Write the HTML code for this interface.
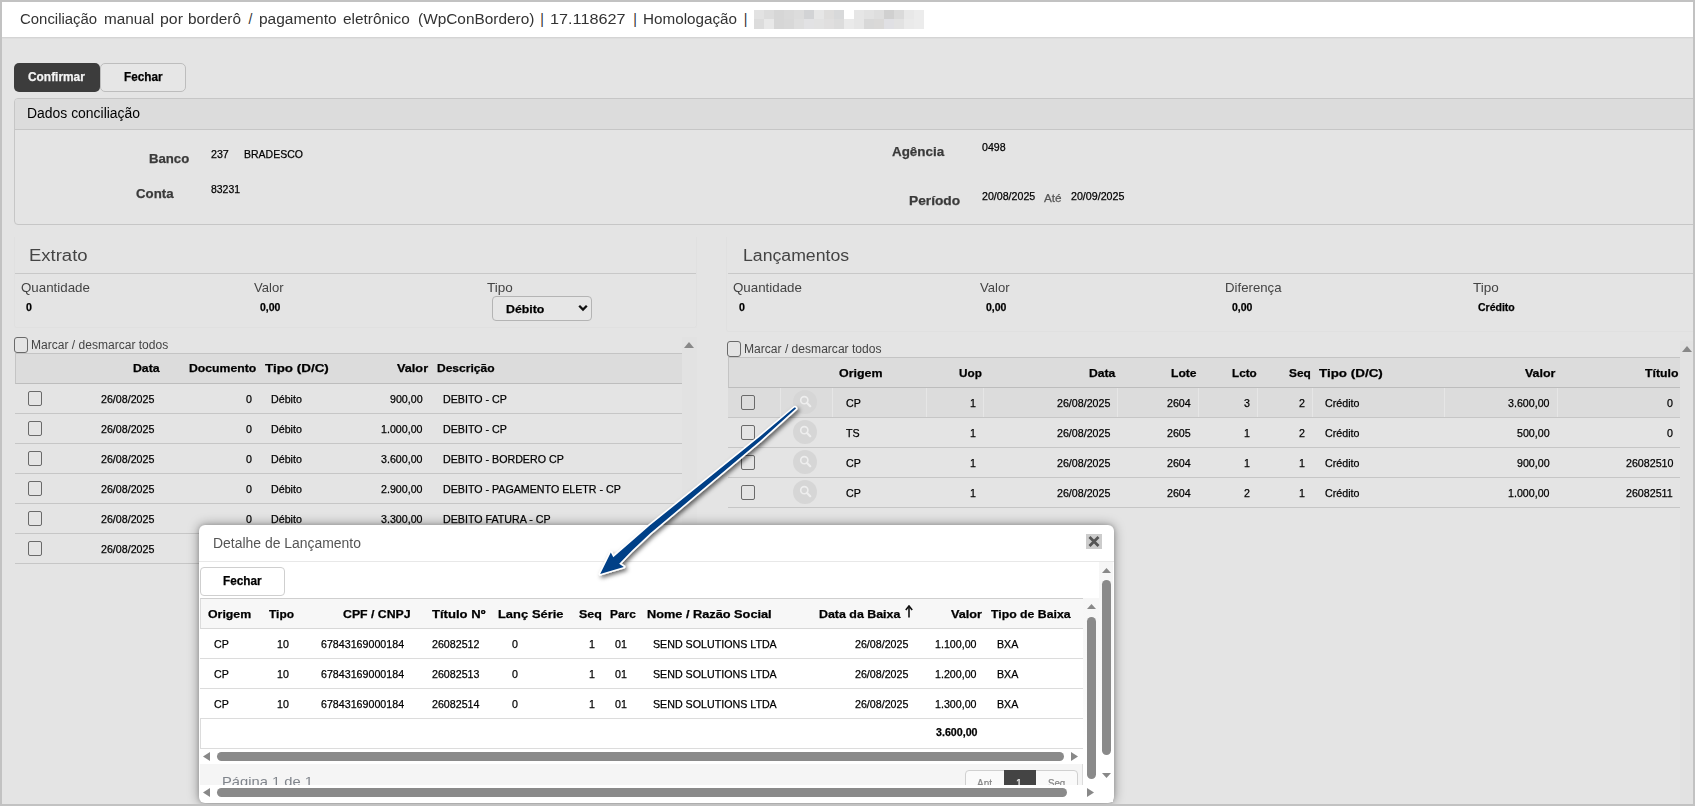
<!DOCTYPE html>
<html><head><meta charset="utf-8"><style>
html,body{margin:0;padding:0;}
body{width:1695px;height:806px;overflow:hidden;position:relative;background:#e4e4e4;font-family:'Liberation Sans', sans-serif;}
body>div,body>span,body>svg{position:absolute;box-sizing:border-box;}
.t{white-space:pre;transform-origin:0 0;}
.s{-webkit-text-stroke:0.25px currentColor;}
</style></head><body>
<div style="left:0px;top:0px;width:1695px;height:806px;background:#e4e4e4;"></div>
<div style="left:2px;top:2px;width:1691px;height:35px;background:#fff;"></div>
<div style="left:2px;top:37px;width:1691px;height:1px;background:#d4d4d4;"></div>
<div style="left:2px;top:38px;width:1691px;height:1px;background:#dedede;"></div>
<span class="t" style="left:19.60px;top:10.00px;font-size:14px;line-height:19px;font-weight:400;color:#333;transform:scaleX(1.0663);">Conciliação</span>
<span class="t" style="left:103.70px;top:10.00px;font-size:14px;line-height:19px;font-weight:400;color:#333;transform:scaleX(1.0937);">manual</span>
<span class="t" style="left:160.40px;top:10.00px;font-size:14px;line-height:19px;font-weight:400;color:#333;transform:scaleX(1.1326);">por</span>
<span class="t" style="left:188.00px;top:10.00px;font-size:14px;line-height:19px;font-weight:400;color:#333;transform:scaleX(1.0976);">borderô</span>
<span class="t" style="left:258.90px;top:10.00px;font-size:14px;line-height:19px;font-weight:400;color:#333;transform:scaleX(1.1072);">pagamento</span>
<span class="t" style="left:343.30px;top:10.00px;font-size:14px;line-height:19px;font-weight:400;color:#333;transform:scaleX(1.0999);">eletrônico</span>
<span class="t" style="left:417.50px;top:10.00px;font-size:14px;line-height:19px;font-weight:400;color:#333;transform:scaleX(1.0994);">(WpConBordero)</span>
<span class="t" style="left:550.34px;top:10.00px;font-size:14px;line-height:19px;font-weight:400;color:#333;transform:scaleX(1.1592);">17.118627</span>
<span class="t" style="left:643.01px;top:10.00px;font-size:14px;line-height:19px;font-weight:400;color:#333;transform:scaleX(1.0888);">Homologação</span>
<span class="t" style="left:540.30px;top:10.00px;font-size:14px;line-height:19px;font-weight:400;color:#333;">|</span>
<span class="t" style="left:633.20px;top:10.00px;font-size:14px;line-height:19px;font-weight:400;color:#333;">|</span>
<span class="t" style="left:743.80px;top:10.00px;font-size:14px;line-height:19px;font-weight:400;color:#333;">|</span>
<span class="t" style="left:248.60px;top:10.00px;font-size:14px;line-height:19px;font-weight:400;color:#333;">/</span>
<div style="left:754px;top:10px;width:10px;height:9px;background:#e2e2e2;"></div>
<div style="left:754px;top:19px;width:10px;height:10px;background:#dcdcdc;"></div>
<div style="left:764px;top:10px;width:10px;height:9px;background:#dcdcdc;"></div>
<div style="left:764px;top:19px;width:10px;height:10px;background:#e8e8e8;"></div>
<div style="left:774px;top:10px;width:10px;height:9px;background:#d6d6d6;"></div>
<div style="left:774px;top:19px;width:10px;height:10px;background:#d6d6d6;"></div>
<div style="left:784px;top:10px;width:10px;height:9px;background:#d9d9d9;"></div>
<div style="left:784px;top:19px;width:10px;height:10px;background:#d8d8d8;"></div>
<div style="left:794px;top:10px;width:10px;height:9px;background:#dcdcdc;"></div>
<div style="left:794px;top:19px;width:10px;height:10px;background:#dedede;"></div>
<div style="left:804px;top:10px;width:10px;height:9px;background:#d2d3d5;"></div>
<div style="left:804px;top:19px;width:10px;height:10px;background:#e2e2e4;"></div>
<div style="left:814px;top:10px;width:10px;height:9px;background:#e6e6e6;"></div>
<div style="left:814px;top:19px;width:10px;height:10px;background:#e2e2e2;"></div>
<div style="left:824px;top:10px;width:10px;height:9px;background:#dedddc;"></div>
<div style="left:824px;top:19px;width:10px;height:10px;background:#e0dfdf;"></div>
<div style="left:834px;top:10px;width:10px;height:9px;background:#d8d9da;"></div>
<div style="left:834px;top:19px;width:10px;height:10px;background:#dcdcdc;"></div>
<div style="left:844px;top:10px;width:10px;height:9px;background:#ffffff;"></div>
<div style="left:844px;top:19px;width:10px;height:10px;background:#eaeaea;"></div>
<div style="left:854px;top:10px;width:10px;height:9px;background:#e6e6e6;"></div>
<div style="left:854px;top:19px;width:10px;height:10px;background:#e6e6e6;"></div>
<div style="left:864px;top:10px;width:10px;height:9px;background:#e2e2e2;"></div>
<div style="left:864px;top:19px;width:10px;height:10px;background:#d8d8d8;"></div>
<div style="left:874px;top:10px;width:10px;height:9px;background:#dedede;"></div>
<div style="left:874px;top:19px;width:10px;height:10px;background:#dad9d8;"></div>
<div style="left:884px;top:10px;width:10px;height:9px;background:#d0d0d0;"></div>
<div style="left:884px;top:19px;width:10px;height:10px;background:#e0e0e4;"></div>
<div style="left:894px;top:10px;width:10px;height:9px;background:#dadada;"></div>
<div style="left:894px;top:19px;width:10px;height:10px;background:#e2e2e2;"></div>
<div style="left:904px;top:10px;width:10px;height:9px;background:#e8e8e8;"></div>
<div style="left:904px;top:19px;width:10px;height:10px;background:#eaeaea;"></div>
<div style="left:914px;top:10px;width:10px;height:9px;background:#ececec;"></div>
<div style="left:914px;top:19px;width:10px;height:10px;background:#ececec;"></div>
<div style="left:14px;top:63px;width:86px;height:29px;background:#3c3c3c;border-radius:5px;"></div>
<div style="left:100px;top:63px;width:86px;height:29px;background:#e6e6e6;border:1px solid #bdbdbd;border-radius:5px;"></div>
<span class="t s" style="left:28.30px;top:68.70px;font-size:12px;line-height:16px;font-weight:700;color:#f4f4f4;transform:scaleX(0.9919);">Confirmar</span>
<span class="t s" style="left:124.00px;top:68.70px;font-size:12px;line-height:16px;font-weight:700;color:#000;transform:scaleX(0.9778);">Fechar</span>
<div style="left:14px;top:98px;width:1700px;height:127px;border:1px solid #c6c6c6;border-radius:4px;background:#e4e4e4;"></div>
<div style="left:15px;top:99px;width:1700px;height:30px;background:#dcdcdc;border-radius:3px 0 0 0;"></div>
<div style="left:15px;top:129px;width:1700px;height:1px;background:#c6c6c6;"></div>
<span class="t" style="left:26.70px;top:104.00px;font-size:14px;line-height:19px;font-weight:400;color:#000;transform:scaleX(0.9953);">Dados conciliação</span>
<span class="t s" style="left:149.30px;top:150.00px;font-size:13px;line-height:17px;font-weight:700;color:#3a3a3a;transform:scaleX(1.0128);">Banco</span>
<span class="t s" style="left:136.00px;top:184.80px;font-size:13px;line-height:17px;font-weight:700;color:#3a3a3a;transform:scaleX(1.0186);">Conta</span>
<span class="t s" style="left:210.90px;top:147.00px;font-size:11px;line-height:15px;font-weight:400;color:#000;transform:scaleX(0.9700);">237</span>
<span class="t s" style="left:243.70px;top:147.00px;font-size:11px;line-height:15px;font-weight:400;color:#000;transform:scaleX(0.9537);">BRADESCO</span>
<span class="t s" style="left:210.90px;top:181.80px;font-size:11px;line-height:15px;font-weight:400;color:#000;transform:scaleX(0.9485);">83231</span>
<span class="t s" style="left:892.30px;top:142.70px;font-size:13px;line-height:17px;font-weight:700;color:#3a3a3a;transform:scaleX(1.0303);">Agência</span>
<span class="t s" style="left:981.50px;top:139.80px;font-size:11px;line-height:15px;font-weight:400;color:#000;transform:scaleX(0.9650);">0498</span>
<span class="t s" style="left:909.00px;top:191.80px;font-size:13px;line-height:17px;font-weight:700;color:#3a3a3a;transform:scaleX(1.0567);">Período</span>
<span class="t s" style="left:981.50px;top:188.90px;font-size:11px;line-height:15px;font-weight:400;color:#000;transform:scaleX(0.9666);">20/08/2025</span>
<span class="t s" style="left:1044.00px;top:190.70px;font-size:11px;line-height:15px;font-weight:400;color:#555;transform:scaleX(1.0675);">Até</span>
<span class="t s" style="left:1070.60px;top:188.90px;font-size:11px;line-height:15px;font-weight:400;color:#000;transform:scaleX(0.9702);">20/09/2025</span>
<div style="left:14px;top:237px;width:683px;height:91px;border:1px solid #e0e0e0;border-top:none;border-radius:0 0 3px 3px;"></div>
<div style="left:15px;top:273px;width:681px;height:1px;background:#c8c8c8;"></div>
<span class="t" style="left:29.05px;top:245.00px;font-size:16px;line-height:21px;font-weight:400;color:#444;transform:scaleX(1.1549);">Extrato</span>
<span class="t" style="left:20.50px;top:279.00px;font-size:13px;line-height:17px;font-weight:400;color:#444;transform:scaleX(1.0255);">Quantidade</span>
<span class="t" style="left:254.00px;top:279.00px;font-size:13px;line-height:17px;font-weight:400;color:#444;transform:scaleX(1.0049);">Valor</span>
<span class="t" style="left:487.40px;top:279.00px;font-size:13px;line-height:17px;font-weight:400;color:#444;transform:scaleX(1.0376);">Tipo</span>
<span class="t s" style="left:25.80px;top:300.00px;font-size:11px;line-height:15px;font-weight:700;color:#000;transform:scaleX(0.9667);">0</span>
<span class="t s" style="left:259.90px;top:300.00px;font-size:11px;line-height:15px;font-weight:700;color:#000;transform:scaleX(0.9534);">0,00</span>
<div style="left:492px;top:296px;width:100px;height:25px;border:1px solid #b4b4b4;border-radius:4px;background:#e6e6e6;"></div>
<span class="t s" style="left:505.80px;top:302.00px;font-size:11px;line-height:15px;font-weight:700;color:#000;transform:scaleX(1.1217);">Débito</span>
<svg style="left:578px;top:304px;width:10px;height:8px" viewBox="0 0 10 8"><path d="M1.2 1.8 L5 5.6 L8.8 1.8" fill="none" stroke="#111" stroke-width="2.3"/></svg>
<div style="left:14px;top:337px;width:14px;height:16px;border:1.5px solid #6a6a6a;border-radius:3px;"></div>
<span class="t" style="left:31.40px;top:337.00px;font-size:12px;line-height:16px;font-weight:400;color:#444;transform:scaleX(1.0036);">Marcar / desmarcar todos</span>
<div style="left:682px;top:337px;width:15px;height:230px;background:#e2e2e2;"></div>
<svg style="left:684px;top:342px;width:10px;height:6px" viewBox="0 0 10 6"><path d="M0 6 L5 0 L10 6Z" fill="#888"/></svg>
<div style="left:15px;top:353px;width:667px;height:31px;background:#dcdcdc;border-top:1px solid #c4c4c4;border-left:1px solid #c4c4c4;border-bottom:1px solid #bdbdbd;"></div>
<span class="t s" style="left:132.80px;top:361.20px;font-size:11px;line-height:15px;font-weight:700;color:#000;transform:scaleX(1.1163);">Data</span>
<span class="t s" style="left:189.40px;top:361.20px;font-size:11px;line-height:15px;font-weight:700;color:#000;transform:scaleX(1.1122);">Documento</span>
<span class="t s" style="left:265.30px;top:361.20px;font-size:11px;line-height:15px;font-weight:700;color:#000;transform:scaleX(1.2187);">Tipo (D/C)</span>
<span class="t s" style="left:397.00px;top:361.20px;font-size:11px;line-height:15px;font-weight:700;color:#000;transform:scaleX(1.1548);">Valor</span>
<span class="t s" style="left:436.70px;top:361.20px;font-size:11px;line-height:15px;font-weight:700;color:#000;transform:scaleX(1.0933);">Descrição</span>
<div style="left:15px;top:413px;width:667px;height:1px;background:#c6c6c6;"></div>
<div style="left:28px;top:391px;width:14px;height:15px;border:1.5px solid #6a6a6a;border-radius:2px;"></div>
<span class="t s" style="left:100.70px;top:392.40px;font-size:11px;line-height:15px;font-weight:400;color:#000;transform:scaleX(0.9700);">26/08/2025</span>
<span class="t s" style="left:245.58px;top:392.40px;font-size:11px;line-height:15px;font-weight:400;color:#000;transform:scaleX(0.9700);">0</span>
<span class="t s" style="left:271.20px;top:392.40px;font-size:11px;line-height:15px;font-weight:400;color:#000;transform:scaleX(0.9700);">Débito</span>
<span class="t s" style="left:389.98px;top:392.40px;font-size:11px;line-height:15px;font-weight:400;color:#000;transform:scaleX(0.9700);">900,00</span>
<span class="t s" style="left:442.60px;top:392.40px;font-size:11px;line-height:15px;font-weight:400;color:#000;transform:scaleX(0.9700);">DEBITO - CP</span>
<div style="left:15px;top:443px;width:667px;height:1px;background:#c6c6c6;"></div>
<div style="left:28px;top:421px;width:14px;height:15px;border:1.5px solid #6a6a6a;border-radius:2px;"></div>
<span class="t s" style="left:100.70px;top:422.40px;font-size:11px;line-height:15px;font-weight:400;color:#000;transform:scaleX(0.9700);">26/08/2025</span>
<span class="t s" style="left:245.58px;top:422.40px;font-size:11px;line-height:15px;font-weight:400;color:#000;transform:scaleX(0.9700);">0</span>
<span class="t s" style="left:271.20px;top:422.40px;font-size:11px;line-height:15px;font-weight:400;color:#000;transform:scaleX(0.9700);">Débito</span>
<span class="t s" style="left:381.08px;top:422.40px;font-size:11px;line-height:15px;font-weight:400;color:#000;transform:scaleX(0.9700);">1.000,00</span>
<span class="t s" style="left:442.60px;top:422.40px;font-size:11px;line-height:15px;font-weight:400;color:#000;transform:scaleX(0.9700);">DEBITO - CP</span>
<div style="left:15px;top:473px;width:667px;height:1px;background:#c6c6c6;"></div>
<div style="left:28px;top:451px;width:14px;height:15px;border:1.5px solid #6a6a6a;border-radius:2px;"></div>
<span class="t s" style="left:100.70px;top:452.40px;font-size:11px;line-height:15px;font-weight:400;color:#000;transform:scaleX(0.9700);">26/08/2025</span>
<span class="t s" style="left:245.58px;top:452.40px;font-size:11px;line-height:15px;font-weight:400;color:#000;transform:scaleX(0.9700);">0</span>
<span class="t s" style="left:271.20px;top:452.40px;font-size:11px;line-height:15px;font-weight:400;color:#000;transform:scaleX(0.9700);">Débito</span>
<span class="t s" style="left:381.08px;top:452.40px;font-size:11px;line-height:15px;font-weight:400;color:#000;transform:scaleX(0.9700);">3.600,00</span>
<span class="t s" style="left:442.60px;top:452.40px;font-size:11px;line-height:15px;font-weight:400;color:#000;transform:scaleX(0.9700);">DEBITO - BORDERO CP</span>
<div style="left:15px;top:503px;width:667px;height:1px;background:#c6c6c6;"></div>
<div style="left:28px;top:481px;width:14px;height:15px;border:1.5px solid #6a6a6a;border-radius:2px;"></div>
<span class="t s" style="left:100.70px;top:482.40px;font-size:11px;line-height:15px;font-weight:400;color:#000;transform:scaleX(0.9700);">26/08/2025</span>
<span class="t s" style="left:245.58px;top:482.40px;font-size:11px;line-height:15px;font-weight:400;color:#000;transform:scaleX(0.9700);">0</span>
<span class="t s" style="left:271.20px;top:482.40px;font-size:11px;line-height:15px;font-weight:400;color:#000;transform:scaleX(0.9700);">Débito</span>
<span class="t s" style="left:381.08px;top:482.40px;font-size:11px;line-height:15px;font-weight:400;color:#000;transform:scaleX(0.9700);">2.900,00</span>
<span class="t s" style="left:442.60px;top:482.40px;font-size:11px;line-height:15px;font-weight:400;color:#000;transform:scaleX(0.9700);">DEBITO - PAGAMENTO ELETR - CP</span>
<div style="left:15px;top:533px;width:667px;height:1px;background:#c6c6c6;"></div>
<div style="left:28px;top:511px;width:14px;height:15px;border:1.5px solid #6a6a6a;border-radius:2px;"></div>
<span class="t s" style="left:100.70px;top:512.40px;font-size:11px;line-height:15px;font-weight:400;color:#000;transform:scaleX(0.9700);">26/08/2025</span>
<span class="t s" style="left:245.58px;top:512.40px;font-size:11px;line-height:15px;font-weight:400;color:#000;transform:scaleX(0.9700);">0</span>
<span class="t s" style="left:271.20px;top:512.40px;font-size:11px;line-height:15px;font-weight:400;color:#000;transform:scaleX(0.9700);">Débito</span>
<span class="t s" style="left:381.08px;top:512.40px;font-size:11px;line-height:15px;font-weight:400;color:#000;transform:scaleX(0.9700);">3.300,00</span>
<span class="t s" style="left:442.60px;top:512.40px;font-size:11px;line-height:15px;font-weight:400;color:#000;transform:scaleX(0.9700);">DEBITO FATURA - CP</span>
<div style="left:15px;top:563px;width:667px;height:1px;background:#c6c6c6;"></div>
<div style="left:28px;top:541px;width:14px;height:15px;border:1.5px solid #6a6a6a;border-radius:2px;"></div>
<span class="t s" style="left:100.70px;top:542.40px;font-size:11px;line-height:15px;font-weight:400;color:#000;transform:scaleX(0.9700);">26/08/2025</span>
<div style="left:726px;top:237px;width:980px;height:95px;border:1px solid #e0e0e0;border-top:none;border-radius:0 0 3px 3px;"></div>
<div style="left:728px;top:273px;width:969px;height:1px;background:#c8c8c8;"></div>
<span class="t" style="left:743.30px;top:245.00px;font-size:16px;line-height:21px;font-weight:400;color:#444;transform:scaleX(1.1045);">Lançamentos</span>
<span class="t" style="left:733.10px;top:279.00px;font-size:13px;line-height:17px;font-weight:400;color:#444;transform:scaleX(1.0255);">Quantidade</span>
<span class="t" style="left:979.60px;top:279.00px;font-size:13px;line-height:17px;font-weight:400;color:#444;transform:scaleX(1.0049);">Valor</span>
<span class="t" style="left:1225.18px;top:279.00px;font-size:13px;line-height:17px;font-weight:400;color:#444;transform:scaleX(1.0161);">Diferença</span>
<span class="t" style="left:1472.60px;top:279.00px;font-size:13px;line-height:17px;font-weight:400;color:#444;transform:scaleX(1.0376);">Tipo</span>
<span class="t s" style="left:738.80px;top:300.00px;font-size:11px;line-height:15px;font-weight:700;color:#000;transform:scaleX(0.9667);">0</span>
<span class="t s" style="left:985.50px;top:300.00px;font-size:11px;line-height:15px;font-weight:700;color:#000;transform:scaleX(0.9534);">0,00</span>
<span class="t s" style="left:1232.40px;top:300.00px;font-size:11px;line-height:15px;font-weight:700;color:#000;transform:scaleX(0.9534);">0,00</span>
<span class="t s" style="left:1478.40px;top:300.00px;font-size:11px;line-height:15px;font-weight:700;color:#000;transform:scaleX(0.9541);">Crédito</span>
<div style="left:727px;top:341px;width:14px;height:16px;border:1.5px solid #6a6a6a;border-radius:3px;"></div>
<span class="t" style="left:744.20px;top:341.00px;font-size:12px;line-height:16px;font-weight:400;color:#444;transform:scaleX(1.0058);">Marcar / desmarcar todos</span>
<div style="left:1680px;top:341px;width:13px;height:465px;background:#e2e2e2;"></div>
<svg style="left:1682px;top:346px;width:10px;height:6px" viewBox="0 0 10 6"><path d="M0 6 L5 0 L10 6Z" fill="#888"/></svg>
<div style="left:728px;top:357px;width:952px;height:31px;background:#dcdcdc;border-top:1px solid #c4c4c4;border-left:1px solid #c4c4c4;border-bottom:1px solid #bdbdbd;"></div>
<span class="t s" style="left:839.20px;top:366.00px;font-size:11px;line-height:15px;font-weight:700;color:#000;transform:scaleX(1.1283);">Origem</span>
<span class="t s" style="left:959.30px;top:366.00px;font-size:11px;line-height:15px;font-weight:700;color:#000;transform:scaleX(1.0663);">Uop</span>
<span class="t s" style="left:1089.00px;top:366.00px;font-size:11px;line-height:15px;font-weight:700;color:#000;transform:scaleX(1.1042);">Data</span>
<span class="t s" style="left:1170.70px;top:366.00px;font-size:11px;line-height:15px;font-weight:700;color:#000;transform:scaleX(1.0995);">Lote</span>
<span class="t s" style="left:1231.70px;top:366.00px;font-size:11px;line-height:15px;font-weight:700;color:#000;transform:scaleX(1.0638);">Lcto</span>
<span class="t s" style="left:1289.40px;top:366.00px;font-size:11px;line-height:15px;font-weight:700;color:#000;transform:scaleX(1.0794);">Seq</span>
<span class="t s" style="left:1318.80px;top:366.00px;font-size:11px;line-height:15px;font-weight:700;color:#000;transform:scaleX(1.2187);">Tipo (D/C)</span>
<span class="t s" style="left:1524.80px;top:366.00px;font-size:11px;line-height:15px;font-weight:700;color:#000;transform:scaleX(1.1295);">Valor</span>
<span class="t s" style="left:1645.00px;top:366.00px;font-size:11px;line-height:15px;font-weight:700;color:#000;transform:scaleX(1.1154);">Título</span>
<div style="left:728px;top:388px;width:952px;height:29px;background:#dcdcdc;"></div>
<div style="left:780px;top:388px;width:1px;height:29px;background:#e6e6e6;"></div>
<div style="left:832px;top:388px;width:1px;height:29px;background:#e6e6e6;"></div>
<div style="left:926px;top:388px;width:1px;height:29px;background:#e6e6e6;"></div>
<div style="left:983px;top:388px;width:1px;height:29px;background:#e6e6e6;"></div>
<div style="left:1117px;top:388px;width:1px;height:29px;background:#e6e6e6;"></div>
<div style="left:1198px;top:388px;width:1px;height:29px;background:#e6e6e6;"></div>
<div style="left:1257px;top:388px;width:1px;height:29px;background:#e6e6e6;"></div>
<div style="left:1312px;top:388px;width:1px;height:29px;background:#e6e6e6;"></div>
<div style="left:1444px;top:388px;width:1px;height:29px;background:#e6e6e6;"></div>
<div style="left:1557px;top:388px;width:1px;height:29px;background:#e6e6e6;"></div>
<div style="left:728px;top:417px;width:952px;height:1px;background:#c6c6c6;"></div>
<div style="left:741px;top:395px;width:14px;height:15px;border:1.5px solid #6a6a6a;border-radius:2px;"></div>
<div style="left:793px;top:390px;width:24px;height:24px;border-radius:50%;background:#d6d6d6;"></div>
<svg style="left:797px;top:394px;width:16px;height:16px" viewBox="0 0 16 16"><circle cx="7.3" cy="6.2" r="3.6" fill="none" stroke="#eeeeee" stroke-width="1.6"/><path d="M9.8 8.8 L13.2 12.2" stroke="#eeeeee" stroke-width="2.2" stroke-linecap="round"/></svg>
<span class="t s" style="left:845.60px;top:396.40px;font-size:11px;line-height:15px;font-weight:400;color:#000;transform:scaleX(0.9700);">CP</span>
<span class="t s" style="left:970.18px;top:396.40px;font-size:11px;line-height:15px;font-weight:400;color:#000;transform:scaleX(0.9700);">1</span>
<span class="t s" style="left:1057.11px;top:396.40px;font-size:11px;line-height:15px;font-weight:400;color:#000;transform:scaleX(0.9700);">26/08/2025</span>
<span class="t s" style="left:1167.08px;top:396.40px;font-size:11px;line-height:15px;font-weight:400;color:#000;transform:scaleX(0.9700);">2604</span>
<span class="t s" style="left:1244.18px;top:396.40px;font-size:11px;line-height:15px;font-weight:400;color:#000;transform:scaleX(0.9700);">3</span>
<span class="t s" style="left:1299.18px;top:396.40px;font-size:11px;line-height:15px;font-weight:400;color:#000;transform:scaleX(0.9700);">2</span>
<span class="t s" style="left:1325.30px;top:396.40px;font-size:11px;line-height:15px;font-weight:400;color:#000;transform:scaleX(0.9700);">Crédito</span>
<span class="t s" style="left:1508.48px;top:396.40px;font-size:11px;line-height:15px;font-weight:400;color:#000;transform:scaleX(0.9700);">3.600,00</span>
<span class="t s" style="left:1667.18px;top:396.40px;font-size:11px;line-height:15px;font-weight:400;color:#000;transform:scaleX(0.9700);">0</span>
<div style="left:728px;top:447px;width:952px;height:1px;background:#c6c6c6;"></div>
<div style="left:741px;top:425px;width:14px;height:15px;border:1.5px solid #6a6a6a;border-radius:2px;"></div>
<div style="left:793px;top:420px;width:24px;height:24px;border-radius:50%;background:#d6d6d6;"></div>
<svg style="left:797px;top:424px;width:16px;height:16px" viewBox="0 0 16 16"><circle cx="7.3" cy="6.2" r="3.6" fill="none" stroke="#eeeeee" stroke-width="1.6"/><path d="M9.8 8.8 L13.2 12.2" stroke="#eeeeee" stroke-width="2.2" stroke-linecap="round"/></svg>
<span class="t s" style="left:845.60px;top:426.40px;font-size:11px;line-height:15px;font-weight:400;color:#000;transform:scaleX(0.9700);">TS</span>
<span class="t s" style="left:970.18px;top:426.40px;font-size:11px;line-height:15px;font-weight:400;color:#000;transform:scaleX(0.9700);">1</span>
<span class="t s" style="left:1057.11px;top:426.40px;font-size:11px;line-height:15px;font-weight:400;color:#000;transform:scaleX(0.9700);">26/08/2025</span>
<span class="t s" style="left:1167.08px;top:426.40px;font-size:11px;line-height:15px;font-weight:400;color:#000;transform:scaleX(0.9700);">2605</span>
<span class="t s" style="left:1244.18px;top:426.40px;font-size:11px;line-height:15px;font-weight:400;color:#000;transform:scaleX(0.9700);">1</span>
<span class="t s" style="left:1299.18px;top:426.40px;font-size:11px;line-height:15px;font-weight:400;color:#000;transform:scaleX(0.9700);">2</span>
<span class="t s" style="left:1325.30px;top:426.40px;font-size:11px;line-height:15px;font-weight:400;color:#000;transform:scaleX(0.9700);">Crédito</span>
<span class="t s" style="left:1517.38px;top:426.40px;font-size:11px;line-height:15px;font-weight:400;color:#000;transform:scaleX(0.9700);">500,00</span>
<span class="t s" style="left:1667.18px;top:426.40px;font-size:11px;line-height:15px;font-weight:400;color:#000;transform:scaleX(0.9700);">0</span>
<div style="left:728px;top:477px;width:952px;height:1px;background:#c6c6c6;"></div>
<div style="left:741px;top:455px;width:14px;height:15px;border:1.5px solid #6a6a6a;border-radius:2px;"></div>
<div style="left:793px;top:450px;width:24px;height:24px;border-radius:50%;background:#d6d6d6;"></div>
<svg style="left:797px;top:454px;width:16px;height:16px" viewBox="0 0 16 16"><circle cx="7.3" cy="6.2" r="3.6" fill="none" stroke="#eeeeee" stroke-width="1.6"/><path d="M9.8 8.8 L13.2 12.2" stroke="#eeeeee" stroke-width="2.2" stroke-linecap="round"/></svg>
<span class="t s" style="left:845.60px;top:456.40px;font-size:11px;line-height:15px;font-weight:400;color:#000;transform:scaleX(0.9700);">CP</span>
<span class="t s" style="left:970.18px;top:456.40px;font-size:11px;line-height:15px;font-weight:400;color:#000;transform:scaleX(0.9700);">1</span>
<span class="t s" style="left:1057.11px;top:456.40px;font-size:11px;line-height:15px;font-weight:400;color:#000;transform:scaleX(0.9700);">26/08/2025</span>
<span class="t s" style="left:1167.08px;top:456.40px;font-size:11px;line-height:15px;font-weight:400;color:#000;transform:scaleX(0.9700);">2604</span>
<span class="t s" style="left:1244.18px;top:456.40px;font-size:11px;line-height:15px;font-weight:400;color:#000;transform:scaleX(0.9700);">1</span>
<span class="t s" style="left:1299.18px;top:456.40px;font-size:11px;line-height:15px;font-weight:400;color:#000;transform:scaleX(0.9700);">1</span>
<span class="t s" style="left:1325.30px;top:456.40px;font-size:11px;line-height:15px;font-weight:400;color:#000;transform:scaleX(0.9700);">Crédito</span>
<span class="t s" style="left:1517.38px;top:456.40px;font-size:11px;line-height:15px;font-weight:400;color:#000;transform:scaleX(0.9700);">900,00</span>
<span class="t s" style="left:1625.64px;top:456.40px;font-size:11px;line-height:15px;font-weight:400;color:#000;transform:scaleX(0.9700);">26082510</span>
<div style="left:728px;top:507px;width:952px;height:1px;background:#c6c6c6;"></div>
<div style="left:741px;top:485px;width:14px;height:15px;border:1.5px solid #6a6a6a;border-radius:2px;"></div>
<div style="left:793px;top:480px;width:24px;height:24px;border-radius:50%;background:#d6d6d6;"></div>
<svg style="left:797px;top:484px;width:16px;height:16px" viewBox="0 0 16 16"><circle cx="7.3" cy="6.2" r="3.6" fill="none" stroke="#eeeeee" stroke-width="1.6"/><path d="M9.8 8.8 L13.2 12.2" stroke="#eeeeee" stroke-width="2.2" stroke-linecap="round"/></svg>
<span class="t s" style="left:845.60px;top:486.40px;font-size:11px;line-height:15px;font-weight:400;color:#000;transform:scaleX(0.9700);">CP</span>
<span class="t s" style="left:970.18px;top:486.40px;font-size:11px;line-height:15px;font-weight:400;color:#000;transform:scaleX(0.9700);">1</span>
<span class="t s" style="left:1057.11px;top:486.40px;font-size:11px;line-height:15px;font-weight:400;color:#000;transform:scaleX(0.9700);">26/08/2025</span>
<span class="t s" style="left:1167.08px;top:486.40px;font-size:11px;line-height:15px;font-weight:400;color:#000;transform:scaleX(0.9700);">2604</span>
<span class="t s" style="left:1244.18px;top:486.40px;font-size:11px;line-height:15px;font-weight:400;color:#000;transform:scaleX(0.9700);">2</span>
<span class="t s" style="left:1299.18px;top:486.40px;font-size:11px;line-height:15px;font-weight:400;color:#000;transform:scaleX(0.9700);">1</span>
<span class="t s" style="left:1325.30px;top:486.40px;font-size:11px;line-height:15px;font-weight:400;color:#000;transform:scaleX(0.9700);">Crédito</span>
<span class="t s" style="left:1508.48px;top:486.40px;font-size:11px;line-height:15px;font-weight:400;color:#000;transform:scaleX(0.9700);">1.000,00</span>
<span class="t s" style="left:1626.43px;top:486.40px;font-size:11px;line-height:15px;font-weight:400;color:#000;transform:scaleX(0.9700);">26082511</span>
<div style="left:199px;top:525px;width:915px;height:278px;background:#fff;border-radius:6px;box-shadow:0 0 12px rgba(0,0,0,0.4),0 0 4px rgba(0,0,0,0.15);"></div>
<div style="left:199px;top:561px;width:915px;height:1px;background:#e8e8e8;"></div>
<span class="t" style="left:212.60px;top:534.00px;font-size:14px;line-height:19px;font-weight:400;color:#555;transform:scaleX(0.9954);">Detalhe de Lançamento</span>
<div style="left:1086px;top:534px;width:16px;height:15px;background:#cccccc;"></div>
<svg style="left:1086px;top:534px;width:16px;height:15px" viewBox="0 0 16 15"><path d="M3.5 3 L12.5 12 M12.5 3 L3.5 12" stroke="#555" stroke-width="2.8"/></svg>
<div style="left:1099px;top:562px;width:14px;height:240px;background:linear-gradient(#f6f6f6,#f9f9f9 50%,#fff 80%);"></div>
<svg style="left:1102px;top:568px;width:9px;height:5px" viewBox="0 0 9 5"><path d="M0 5 L4.5 0 L9 5Z" fill="#888"/></svg>
<div style="left:1102px;top:580px;width:9px;height:175px;background:#8a8a8a;border-radius:5px;"></div>
<svg style="left:1102px;top:773px;width:9px;height:5px" viewBox="0 0 9 5"><path d="M0 0 L4.5 5 L9 0Z" fill="#888"/></svg>
<div style="left:200px;top:567px;width:85px;height:29px;background:#fff;border:1px solid #cfcfcf;border-radius:4px;"></div>
<span class="t s" style="left:222.50px;top:573.40px;font-size:12px;line-height:16px;font-weight:700;color:#000;transform:scaleX(0.9828);">Fechar</span>
<div style="left:200px;top:598px;width:883px;height:31px;background:#f7f7f7;border-top:1px solid #cfcfcf;border-left:1px solid #dcdcdc;border-bottom:1px solid #d8d8d8;"></div>
<span class="t s" style="left:208.00px;top:606.90px;font-size:11px;line-height:15px;font-weight:700;color:#000;transform:scaleX(1.1206);">Origem</span>
<span class="t s" style="left:269.40px;top:606.90px;font-size:11px;line-height:15px;font-weight:700;color:#000;transform:scaleX(1.0860);">Tipo</span>
<span class="t s" style="left:342.70px;top:606.90px;font-size:11px;line-height:15px;font-weight:700;color:#000;transform:scaleX(1.1177);">CPF / CNPJ</span>
<span class="t s" style="left:431.90px;top:606.90px;font-size:11px;line-height:15px;font-weight:700;color:#000;transform:scaleX(1.1884);">Título Nº</span>
<span class="t s" style="left:497.60px;top:606.90px;font-size:11px;line-height:15px;font-weight:700;color:#000;transform:scaleX(1.1700);">Lanç</span>
<span class="t s" style="left:532.20px;top:606.90px;font-size:11px;line-height:15px;font-weight:700;color:#000;transform:scaleX(1.1720);">Série</span>
<span class="t s" style="left:578.80px;top:606.90px;font-size:11px;line-height:15px;font-weight:700;color:#000;transform:scaleX(1.1308);">Seq</span>
<span class="t s" style="left:609.50px;top:606.90px;font-size:11px;line-height:15px;font-weight:700;color:#000;transform:scaleX(1.0786);">Parc</span>
<span class="t s" style="left:647.20px;top:606.90px;font-size:11px;line-height:15px;font-weight:700;color:#000;transform:scaleX(1.1587);">Nome / Razão Social</span>
<span class="t s" style="left:819.40px;top:606.90px;font-size:11px;line-height:15px;font-weight:700;color:#000;transform:scaleX(1.1270);">Data da Baixa</span>
<span class="t s" style="left:951.20px;top:606.90px;font-size:11px;line-height:15px;font-weight:700;color:#000;transform:scaleX(1.1512);">Valor</span>
<span class="t s" style="left:990.90px;top:606.90px;font-size:11px;line-height:15px;font-weight:700;color:#000;transform:scaleX(1.1150);">Tipo de Baixa</span>
<svg style="left:904px;top:605px;width:10px;height:13px" viewBox="0 0 10 13"><path d="M5 12.5 L5 2" stroke="#111" stroke-width="1.6"/><path d="M1.8 5 L5 1 L8.2 5" fill="none" stroke="#111" stroke-width="1.6"/></svg>
<div style="left:200px;top:658px;width:883px;height:1px;background:#dcdcdc;"></div>
<span class="t s" style="left:213.50px;top:636.50px;font-size:11px;line-height:15px;font-weight:400;color:#000;transform:scaleX(0.9700);">CP</span>
<span class="t s" style="left:276.85px;top:636.50px;font-size:11px;line-height:15px;font-weight:400;color:#000;transform:scaleX(0.9700);">10</span>
<span class="t s" style="left:320.70px;top:636.50px;font-size:11px;line-height:15px;font-weight:400;color:#000;transform:scaleX(0.9700);">67843169000184</span>
<span class="t s" style="left:431.90px;top:636.50px;font-size:11px;line-height:15px;font-weight:400;color:#000;transform:scaleX(0.9700);">26082512</span>
<span class="t s" style="left:512.38px;top:636.50px;font-size:11px;line-height:15px;font-weight:400;color:#000;transform:scaleX(0.9700);">0</span>
<span class="t s" style="left:588.58px;top:636.50px;font-size:11px;line-height:15px;font-weight:400;color:#000;transform:scaleX(0.9700);">1</span>
<span class="t s" style="left:614.90px;top:636.50px;font-size:11px;line-height:15px;font-weight:400;color:#000;transform:scaleX(0.9700);">01</span>
<span class="t s" style="left:653.40px;top:636.50px;font-size:11px;line-height:15px;font-weight:400;color:#000;transform:scaleX(0.9700);">SEND SOLUTIONS LTDA</span>
<span class="t s" style="left:854.61px;top:636.50px;font-size:11px;line-height:15px;font-weight:400;color:#000;transform:scaleX(0.9700);">26/08/2025</span>
<span class="t s" style="left:935.08px;top:636.50px;font-size:11px;line-height:15px;font-weight:400;color:#000;transform:scaleX(0.9700);">1.100,00</span>
<span class="t s" style="left:997.40px;top:636.50px;font-size:11px;line-height:15px;font-weight:400;color:#000;transform:scaleX(0.9700);">BXA</span>
<div style="left:200px;top:688px;width:883px;height:1px;background:#dcdcdc;"></div>
<span class="t s" style="left:213.50px;top:666.50px;font-size:11px;line-height:15px;font-weight:400;color:#000;transform:scaleX(0.9700);">CP</span>
<span class="t s" style="left:276.85px;top:666.50px;font-size:11px;line-height:15px;font-weight:400;color:#000;transform:scaleX(0.9700);">10</span>
<span class="t s" style="left:320.70px;top:666.50px;font-size:11px;line-height:15px;font-weight:400;color:#000;transform:scaleX(0.9700);">67843169000184</span>
<span class="t s" style="left:431.90px;top:666.50px;font-size:11px;line-height:15px;font-weight:400;color:#000;transform:scaleX(0.9700);">26082513</span>
<span class="t s" style="left:512.38px;top:666.50px;font-size:11px;line-height:15px;font-weight:400;color:#000;transform:scaleX(0.9700);">0</span>
<span class="t s" style="left:588.58px;top:666.50px;font-size:11px;line-height:15px;font-weight:400;color:#000;transform:scaleX(0.9700);">1</span>
<span class="t s" style="left:614.90px;top:666.50px;font-size:11px;line-height:15px;font-weight:400;color:#000;transform:scaleX(0.9700);">01</span>
<span class="t s" style="left:653.40px;top:666.50px;font-size:11px;line-height:15px;font-weight:400;color:#000;transform:scaleX(0.9700);">SEND SOLUTIONS LTDA</span>
<span class="t s" style="left:854.61px;top:666.50px;font-size:11px;line-height:15px;font-weight:400;color:#000;transform:scaleX(0.9700);">26/08/2025</span>
<span class="t s" style="left:935.08px;top:666.50px;font-size:11px;line-height:15px;font-weight:400;color:#000;transform:scaleX(0.9700);">1.200,00</span>
<span class="t s" style="left:997.40px;top:666.50px;font-size:11px;line-height:15px;font-weight:400;color:#000;transform:scaleX(0.9700);">BXA</span>
<div style="left:200px;top:718px;width:883px;height:1px;background:#dcdcdc;"></div>
<span class="t s" style="left:213.50px;top:696.50px;font-size:11px;line-height:15px;font-weight:400;color:#000;transform:scaleX(0.9700);">CP</span>
<span class="t s" style="left:276.85px;top:696.50px;font-size:11px;line-height:15px;font-weight:400;color:#000;transform:scaleX(0.9700);">10</span>
<span class="t s" style="left:320.70px;top:696.50px;font-size:11px;line-height:15px;font-weight:400;color:#000;transform:scaleX(0.9700);">67843169000184</span>
<span class="t s" style="left:431.90px;top:696.50px;font-size:11px;line-height:15px;font-weight:400;color:#000;transform:scaleX(0.9700);">26082514</span>
<span class="t s" style="left:512.38px;top:696.50px;font-size:11px;line-height:15px;font-weight:400;color:#000;transform:scaleX(0.9700);">0</span>
<span class="t s" style="left:588.58px;top:696.50px;font-size:11px;line-height:15px;font-weight:400;color:#000;transform:scaleX(0.9700);">1</span>
<span class="t s" style="left:614.90px;top:696.50px;font-size:11px;line-height:15px;font-weight:400;color:#000;transform:scaleX(0.9700);">01</span>
<span class="t s" style="left:653.40px;top:696.50px;font-size:11px;line-height:15px;font-weight:400;color:#000;transform:scaleX(0.9700);">SEND SOLUTIONS LTDA</span>
<span class="t s" style="left:854.61px;top:696.50px;font-size:11px;line-height:15px;font-weight:400;color:#000;transform:scaleX(0.9700);">26/08/2025</span>
<span class="t s" style="left:935.08px;top:696.50px;font-size:11px;line-height:15px;font-weight:400;color:#000;transform:scaleX(0.9700);">1.300,00</span>
<span class="t s" style="left:997.40px;top:696.50px;font-size:11px;line-height:15px;font-weight:400;color:#000;transform:scaleX(0.9700);">BXA</span>
<div style="left:200px;top:718px;width:883px;height:31px;border-left:1px solid #dcdcdc;border-bottom:1px solid #dcdcdc;"></div>
<span class="t s" style="left:935.98px;top:725.00px;font-size:11px;line-height:15px;font-weight:700;color:#000;transform:scaleX(0.9700);">3.600,00</span>
<svg style="left:203px;top:752px;width:7px;height:9px" viewBox="0 0 7 9"><path d="M7 0 L0 4.5 L7 9Z" fill="#888"/></svg>
<div style="left:217px;top:752px;width:847px;height:9px;background:#8a8a8a;border-radius:5px;"></div>
<svg style="left:1071px;top:752px;width:7px;height:9px" viewBox="0 0 7 9"><path d="M0 0 L7 4.5 L0 9Z" fill="#888"/></svg>
<div style="left:1083px;top:598px;width:16px;height:187px;background:linear-gradient(#f6f6f6,#f9f9f9 50%,#fff 80%);"></div>
<div style="left:1087px;top:617px;width:9px;height:162px;background:#8a8a8a;border-radius:5px;"></div>
<svg style="left:1087px;top:604px;width:9px;height:5px" viewBox="0 0 9 5"><path d="M0 5 L4.5 0 L9 5Z" fill="#888"/></svg>
<div style="left:200px;top:764px;width:883px;height:21px;background:#f5f5f5;border-right:1px solid #dcdcdc;"></div>
<span class="t" style="left:222.07px;top:772.60px;font-size:13px;line-height:17px;font-weight:400;color:#80858c;transform:scaleX(1.1328);">Página 1 de 1</span>
<div style="left:965px;top:770px;width:113px;height:30px;background:#fafafa;border:1px solid #d0d0d0;border-radius:4px;"></div>
<div style="left:1004px;top:770px;width:32px;height:30px;background:#444;"></div>
<span class="t s" style="left:977.30px;top:775.60px;font-size:11px;line-height:15px;font-weight:400;color:#888;transform:scaleX(0.9116);">Ant</span>
<span class="t s" style="left:1016.00px;top:775.60px;font-size:11px;line-height:15px;font-weight:400;color:#eee;transform:scaleX(0.9700);">1</span>
<span class="t s" style="left:1048.20px;top:775.60px;font-size:11px;line-height:15px;font-weight:400;color:#888;transform:scaleX(0.8790);">Seg</span>
<div style="left:200px;top:785px;width:899px;height:17px;background:#fff;border-radius:0 0 0 5px;"></div>
<svg style="left:203px;top:788px;width:7px;height:9px" viewBox="0 0 7 9"><path d="M7 0 L0 4.5 L7 9Z" fill="#888"/></svg>
<div style="left:217px;top:788px;width:850px;height:9px;background:#8a8a8a;border-radius:5px;"></div>
<svg style="left:1087px;top:788px;width:7px;height:9px" viewBox="0 0 7 9"><path d="M0 0 L7 4.5 L0 9Z" fill="#888"/></svg>
<svg style="left:0;top:0;width:1695px;height:806px;overflow:visible" viewBox="0 0 1695 806">
<defs><filter id="sh" x="-20%" y="-20%" width="140%" height="140%"><feDropShadow dx="2" dy="2.2" stdDeviation="2" flood-color="#000" flood-opacity="0.6"/></filter></defs>
<path d="M794.4 407.6 Q795.6 407.0 796.0 408.6 L760 441.0 L650 533.5 L632 550.5 L619.2 563.8 L623.8 566.9 L600.2 574 L610.8 552.6 L613.3 557.3 L632 541.0 L650 525.3 L760 436.6 Z" fill="#003f87" stroke="#fff" stroke-width="3.2" stroke-linejoin="round" paint-order="stroke" filter="url(#sh)"/>
</svg>
<div style="left:0px;top:0px;width:1695px;height:2px;background:#c2c2c2;"></div>
<div style="left:0px;top:804px;width:1695px;height:2px;background:#c2c2c2;"></div>
<div style="left:0px;top:0px;width:2px;height:806px;background:#c2c2c2;"></div>
<div style="left:1693px;top:0px;width:2px;height:806px;background:#c2c2c2;"></div>
</body></html>
